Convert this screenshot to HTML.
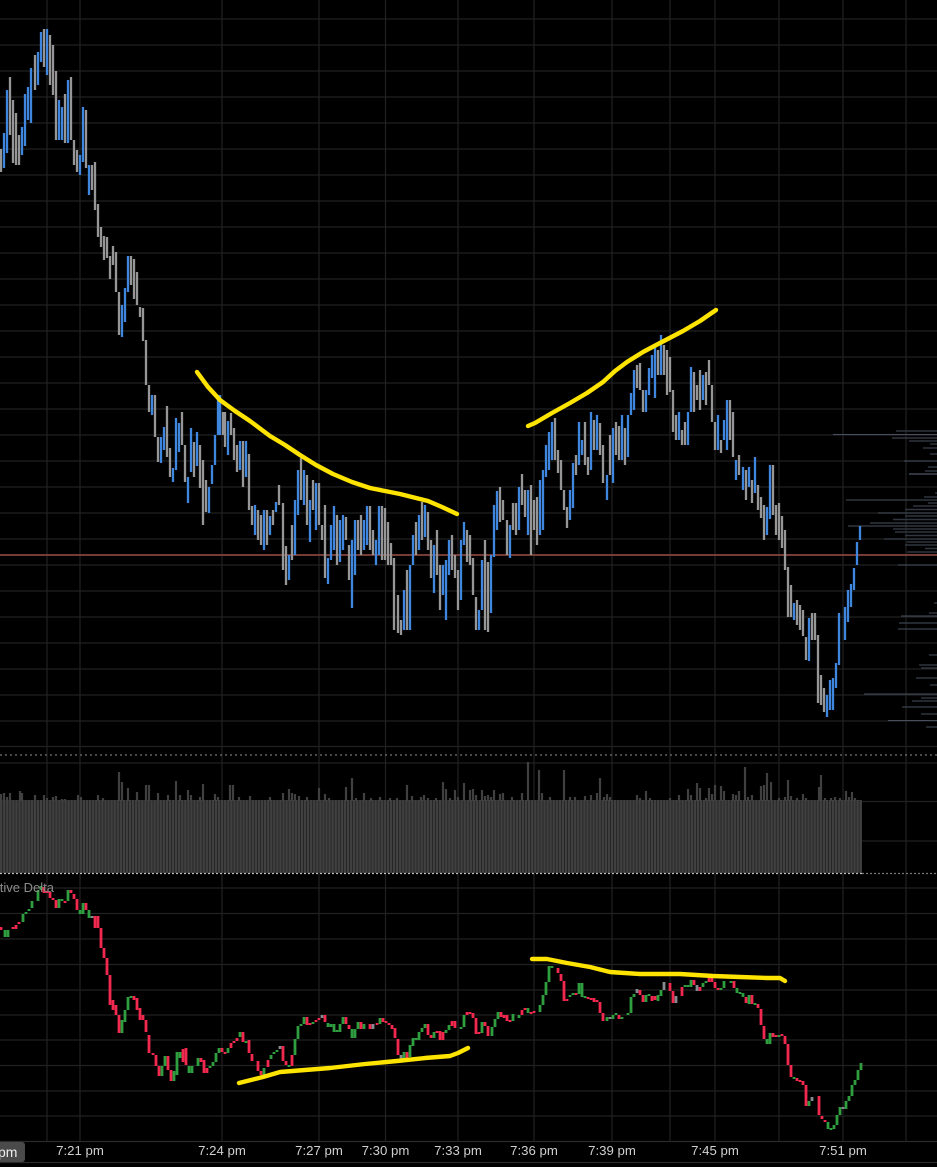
<!DOCTYPE html>
<html>
<head>
<meta charset="utf-8">
<title>Chart</title>
<style>
html,body{margin:0;padding:0;background:#000;width:937px;height:1167px;overflow:hidden}
svg{display:block;position:absolute;left:0;top:0}
text{font-family:"Liberation Sans",Arial,sans-serif}
</style>
</head>
<body>
<svg width="937" height="1167" viewBox="0 0 937 1167" xmlns="http://www.w3.org/2000/svg">
<defs>
<pattern id="vb" patternUnits="userSpaceOnUse" x="0" y="0" width="3.07" height="10">
<rect width="3.07" height="10" fill="#232323"/>
<rect width="2.2" height="10" fill="#404040"/>
</pattern>
</defs>
<rect width="937" height="1167" fill="#000"/>
<!-- horizontal grid -->
<path stroke="#212121" stroke-width="1.2" fill="none" d="M0 19H937M0 45H937M0 71H937M0 97H937M0 123H937M0 149H937M0 175H937M0 201H937M0 227H937M0 253H937M0 279H937M0 305H937M0 331H937M0 357H937M0 383H937M0 409H937M0 435H937M0 461H937M0 487H937M0 513H937M0 539H937M0 565H937M0 591H937M0 617H937M0 643H937M0 669H937M0 695H937M0 721H937M0 746.5H937M0 763H937M0 801.500H937M0 841H937M0 888H937M0 913.500H937M0 939H937M0 964.500H937M0 990H937M0 1015H937M0 1040H937M0 1065.500H937M0 1091H937M0 1116H937"/>
<path stroke="#2a2a2a" stroke-width="1.2" fill="none" d="M0 1141.500H937M0 1162.500H937"/>
<!-- vertical grid -->
<path stroke="#212121" stroke-width="1.2" fill="none" d="M47 0V1141M80 0V1141M222 0V1141M319 0V1141M385.500 0V1141M458 0V1141M534 0V1141M612 0V1141M670 0V1141M715 0V1141M779 0V1141M843 0V1141M906 0V1141"/>
<!-- volume profile -->
<path stroke="#2f363f" stroke-width="1.6" fill="none" d="M896 431H937M892 438H937M909 441H937M930 444H937M923 448H937M930 454H937M928 467H937M925 471H937M909 474H937M935 493H937M924 497H937M928 503H937M913 506H937M905 509.500H937M905 516H937M893 519.500H937M893 529H937M895 532H937M905 535.500H937M884 539H937M907 542H937M905 545H937M925 548.500H937M907 552H937M934 603H937M929 613H937M929 655H937M919 665H937M921 668H937M916 678H937M930 685H937M921 698H937M912 701H937M921 714H937M926 727H937"/>
<path stroke="#47505e" stroke-width="1" fill="none" d="M833 434.500H937M904 461H937M909 474H937M846 500H937M878 513H937M870 523H937M848 526H937M898 565H937M901 616H937M899 623H937M898 629H937M864 694H937M902 707H937M888 720.500H937"/>
<!-- separators -->
<path stroke="#777" stroke-width="1.2" stroke-dasharray="2 3" fill="none" d="M0 755H937"/>
<!-- volume -->
<rect x="0" y="800" width="862" height="73" fill="url(#vb)"/>
<path stroke="#404040" stroke-width="2.2" fill="none" d="M1 794V801M4 793V801M7 797V801M10 793V801M20 791V801M22 793V801M35 795V801M44 795V801M47 798V801M53 797V801M56 796V801M62 799V801M65 799V801M78 795V801M81 797V801M98 795V801M103 798V801M119 772V801M122 782V801M128 788V801M137 792V801M146 785V801M149 785V801M158 793V801M168 795V801M176 781V801M180 795V801M188 790V801M191 795V801M200 797V801M203 784V801M215 794V801M218 797V801M230 785V801M233 785V801M239 797V801M250 796V801M270 797V801M283 793V801M289 789V801M292 793V801M295 794V801M299 796V801M307 797V801M319 788V801M325 794V801M329 798V801M346 787V801M352 778V801M356 798V801M364 793V801M371 798V801M380 797V801M390 798V801M397 798V801M407 785V801M412 796V801M421 797V801M424 795V801M428 798V801M436 798V801M443 782V801M446 789V801M450 798V801M455 790V801M458 797V801M464 783V801M470 790V801M473 789V801M476 795V801M482 790V801M485 796V801M488 795V801M491 797V801M494 790V801M500 794V801M503 793V801M512 797V801M522 793V801M528 762V801M539 770V801M542 793V801M550 797V801M564 770V801M570 797V801M575 797V801M585 796V801M591 795V801M597 793V801M600 778V801M604 797V801M607 794V801M610 797V801M637 795V801M640 798V801M646 791V801M650 798V801M670 798V801M679 795V801M688 789V801M691 795V801M697 783V801M700 788V801M706 798V801M709 788V801M712 794V801M715 785V801M721 786V801M724 791V801M733 794V801M736 795V801M739 791V801M745 767V801M748 797V801M752 795V801M761 786V801M764 785V801M767 773V801M771 782V801M779 798V801M785 797V801M788 780V801M791 796V801M797 798V801M803 794V801M806 798V801M819 787V801M821 775V801M825 798V801M831 798V801M835 797V801M840 798V801M846 791V801M849 797V801M852 792V801M855 798V801M858 800V801"/>
<path stroke="#bbb" stroke-width="1.2" stroke-dasharray="2 2" fill="none" d="M0 873.500H862"/>
<path stroke="#777" stroke-width="1.2" stroke-dasharray="2 2" fill="none" d="M862 873.500H937"/>
<!-- last price line -->
<path stroke="#84443b" stroke-width="1.7" fill="none" d="M0 555H937"/>
<!-- price candles: gray -->
<path stroke="#969696" stroke-width="2.3" fill="none" d="M1 149V172M10 77V135M13 100V163M16 113V165M19 135V165M35 55V90M44 29V67M50 35V85M53 45V95M56 71V140M65 94V143M71 77V140M74 140V165M77 150V172M86 110V168M92 165V190M95 162V210M98 204V237M101 227V247M104 236V260M107 237V258M110 256V279M113 246V265M116 252V292M119 292V335M131 256V285M134 259V299M137 272V305M140 307V317M143 308V341M146 340V385M149 385V412M155 395V437M158 437V462M167 406V457M170 448V477M182 412V445M185 445V482M194 442V477M200 445V488M203 460V525M206 480V512M223 412V435M225 412V447M231 413V435M234 428V460M237 445V472M243 441V487M249 454V510M252 506V525M258 510V540M261 515V545M267 510V545M273 510V525M279 485V505M283 503V570M286 546V585M292 525V560M301 458V500M307 475V525M313 480V510M319 483V525M322 525V540M325 505V578M337 515V565M346 517V540M349 545V580M358 520V550M361 515V555M370 506V550M373 530V555M382 506V560M385 508V560M388 522V565M391 543V565M394 558V630M398 595V633M401 620V635M407 570V630M416 522V555M422 502V540M428 512V550M431 540V578M437 530V575M440 565V610M452 535V570M455 555V578M458 570V610M467 530V562M470 535V565M473 558V595M476 597V630M485 540V630M488 562V632M500 487V522M503 500V520M507 520V555M513 503V530M516 503V535M522 474V505M525 490V517M531 485V555M534 500V530M537 497V545M555 418V460M558 450V473M561 460V490M564 490V510M567 507V528M576 455V475M585 422V465M588 457V475M594 420V450M600 423V455M603 445V483M610 435V475M616 422V455M619 426V460M625 428V465M637 365V388M640 363V390M643 390V412M658 350V375M664 345V375M667 350V395M670 357V392M673 390V432M676 415V440M682 430V445M685 422V445M694 372V412M697 385V400M700 370V410M706 372V405M709 360V385M712 385V422M715 422V450M721 440V453M730 400V440M733 412V457M739 455V475M746 470V500M752 480V503M758 485V510M761 497V518M764 505V540M773 465V515M776 505V535M779 503V540M782 516V548M785 530V570M788 567V617M791 585V617M797 600V625M800 605V630M803 610V636M806 637V660M812 613V640M815 613V640M818 635V703M821 675V705M824 688V712"/>
<!-- price candles: blue -->
<path stroke="#3f87de" stroke-width="2.3" fill="none" d="M4 133V168M7 90V153M22 127V155M25 94V146M28 87V120M31 68V123M38 52V85M41 32V62M47 29V75M59 100V140M62 107V140M68 80V143M80 155V175M83 107V162M89 165V195M122 305V337M125 288V322M128 256V292M152 395V415M161 437V463M164 427V450M173 468V482M176 418V470M179 423V452M188 477V503M191 428V472M197 432V466M209 487V513M212 465V484M215 435V465M218 395V435M220 395V435M228 421V455M240 441V470M246 441V477M255 505V535M264 510V550M270 516V535M276 502V512M289 555V580M295 500V555M298 470V515M304 470V505M310 500V542M316 483V530M328 558V584M331 525V560M334 506V550M340 520V562M343 515V550M352 540V608M355 520V575M364 520V550M367 506V545M376 540V565M379 506V555M404 590V630M410 565V630M413 535V565M419 515V550M425 505V537M434 545V593M443 565V595M446 560V620M449 540V575M461 540V600M464 522V545M479 610V630M482 560V610M491 555V613M494 505V557M497 491V530M510 525V558M519 487V530M528 490V535M540 480V535M543 470V530M546 445V477M549 432V470M552 422V460M570 490V520M573 463V508M579 422V465M582 440V455M591 412V470M597 415V450M607 475V500M613 428V483M622 415V460M628 415V457M631 393V415M634 370V410M646 390V412M649 368V395M652 355V378M655 345V398M661 335V375M679 412V440M688 412V445M691 367V412M703 375V400M718 415V450M724 420V440M727 400V450M736 460V480M743 467V490M749 467V487M755 457V493M767 507V535M770 465V519M794 603V620M809 618V661M827 695V717M830 680V710M833 678V710M836 663V688M839 613V665M845 607V640M848 590V622M851 584V607M854 568V590M857 542V565M860 526V540"/>
<!-- delta candles -->
<path stroke="#f2284f" stroke-width="2.8" fill="none" d="M1 927V930M13 927V929M16 925V929M19 922V924M44 887V893M47 891V893M50 892V898M53 898V900M56 900V908M65 901V903M71 890V893M74 894V899M77 899V910M86 903V910M95 916V928M98 916V928M101 928V948M104 948V958M107 958V975M110 975V1005M113 1000V1010M116 1005V1015M119 1015V1033M134 996V1000M137 998V1010M140 1008V1020M143 1015V1020M146 1020V1032M149 1035V1053M153 1053V1055M156 1055V1066M159 1066V1076M168 1056V1070M171 1070V1081M183 1049V1062M186 1048V1065M201 1058V1062M204 1060V1073M207 1068V1073M222 1048V1052M225 1052V1054M231 1043V1048M234 1041V1043M237 1038V1041M243 1032V1042M249 1040V1053M252 1054V1061M258 1061V1071M261 1071V1075M268 1060V1067M283 1046V1061M286 1061V1065M292 1055V1066M307 1017V1025M310 1023V1025M316 1020V1022M319 1018V1020M325 1015V1022M346 1017V1024M349 1025V1029M361 1022V1029M370 1024V1029M377 1023V1025M383 1018V1022M386 1021V1023M389 1023V1025M392 1025V1029M395 1028V1038M398 1039V1055M407 1052V1058M428 1024V1035M431 1035V1038M437 1031V1033M440 1031V1040M443 1032V1040M452 1021V1026M455 1021V1028M467 1012V1015M470 1012V1014M473 1013V1018M476 1018V1034M479 1032V1034M485 1022V1026M488 1026V1036M501 1012V1017M504 1015V1018M507 1015V1021M510 1020V1022M522 1010V1015M525 1008V1010M531 1012V1014M534 1011V1013M558 968V973M561 974V981M564 981V1001M567 999V1001M576 993V995M588 997V999M591 998V1000M594 998V1002M597 1000V1002M600 1002V1013M603 1013V1021M619 1015V1019M640 990V995M643 995V1002M652 996V1001M655 996V1000M670 983V991M673 991V1003M682 987V996M694 980V985M700 987V991M709 977V982M712 977V982M715 982V988M718 988V990M734 981V988M746 997V1003M752 995V1004M758 1004V1008M761 1009V1025M764 1026V1039M773 1033V1037M776 1035V1037M782 1034V1036M785 1036V1044M788 1044V1065M791 1065V1077M797 1078V1081M800 1080V1082M803 1081V1085M806 1085V1106M819 1096V1115M822 1116V1119M825 1120V1122"/>
<path stroke="#2f9e3f" stroke-width="2.8" fill="none" d="M5 930V937M8 930V937M23 914V922M26 912V914M29 909V911M32 901V908M38 890V901M41 886V890M59 899V908M62 899V901M68 890V901M80 910V914M83 903V914M89 910V918M122 1020V1033M125 1010V1022M128 997V1010M131 996V998M162 1066V1076M165 1056V1066M174 1071V1081M177 1052V1075M180 1052V1058M189 1066V1073M192 1066V1073M198 1058V1066M210 1066V1068M213 1062V1066M216 1053V1062M219 1048V1053M228 1048V1053M240 1032V1037M246 1041V1043M264 1068V1075M271 1055V1059M274 1052V1054M277 1050V1052M289 1065V1067M295 1039V1055M298 1026V1039M301 1024V1026M304 1017V1024M313 1022V1024M328 1023V1027M331 1024V1027M334 1024V1032M337 1030V1032M340 1024V1032M343 1017V1024M352 1029V1038M355 1029V1038M358 1022V1029M364 1024V1029M380 1018V1024M404 1052V1059M410 1045V1057M413 1038V1046M416 1038V1040M419 1032V1040M422 1028V1032M425 1024V1028M434 1032V1038M446 1030V1033M449 1025V1030M461 1027V1029M464 1015V1027M482 1022V1033M492 1027V1036M495 1019V1027M498 1012V1019M513 1014V1021M519 1015V1018M528 1008V1013M540 1005V1012M543 995V1005M546 982V995M549 966V982M552 966V968M570 995V997M573 993V995M579 983V994M582 983V997M585 996V998M607 1017V1021M613 1015V1019M616 1013V1015M622 1017V1019M628 1013V1015M631 997V1013M634 994V997M646 995V1002M649 994V996M658 995V1001M661 990V996M685 985V987M688 985V987M691 980V987M703 983V987M706 981V983M721 988V990M724 981V988M731 981V983M737 988V993M740 992V994M743 993V997M749 995V1004M755 1003V1005M767 1039V1044M770 1033V1044M779 1035V1037M794 1077V1079M809 1101V1106M828 1122V1129M831 1128V1130M834 1125V1129M837 1115V1125M840 1107V1115M846 1101V1109M849 1096V1101M852 1085V1096M855 1080V1085M858 1070V1080M861 1063V1070"/>
<path stroke="#868b92" stroke-width="2.8" fill="none" d="M92 916V918M280 1046V1049M322 1015V1018M373 1024V1029M401 1055V1059M610 1017V1019M637 989V993M664 982V990M676 996V1003M697 985V991M812 1097V1101M843 1107V1109"/>
<!-- hand-drawn lines -->
<g fill="none" stroke="#ffe400" stroke-width="4.4" stroke-linecap="round" stroke-linejoin="round">
<path d="M197 372L208 387L220 400L235 411L250 421L270 436L285 445L300 455L316 465L333 474L352 482L370 488L385 491L400 494L428 501L442 507L457 514"/>
<path d="M528 426L535 423L552 413L570 403L587 393L603 382L615 371L627 362L643 352L660 343L683 331L700 321L716 310"/>
<path d="M239 1083L263 1077L280 1072L330 1068L365 1064L397 1061L425 1058L450 1056L458 1053L468 1048"/>
<path d="M532 959L547 959L567 963L590 967L610 972L640 974L680 974L713 976L740 977L767 978L780 978L785 981"/>
</g>
<!-- labels -->
<text x="54" y="892" text-anchor="end" font-size="13" fill="#8c8c8c">Cumulative Delta</text>
<rect x="-6" y="1142" width="31" height="20" rx="3" fill="#4a4a4a"/>
<text x="-2" y="1157" font-size="14" fill="#eeeeee">pm</text>
<g font-size="13.200" fill="#d0d0d0" text-anchor="middle">
<text x="80" y="1155">7:21 pm</text>
<text x="222" y="1155">7:24 pm</text>
<text x="319" y="1155">7:27 pm</text>
<text x="385.500" y="1155">7:30 pm</text>
<text x="458" y="1155">7:33 pm</text>
<text x="534" y="1155">7:36 pm</text>
<text x="612" y="1155">7:39 pm</text>
<text x="715" y="1155">7:45 pm</text>
<text x="843" y="1155">7:51 pm</text>
</g>
</svg>
</body>
</html>
